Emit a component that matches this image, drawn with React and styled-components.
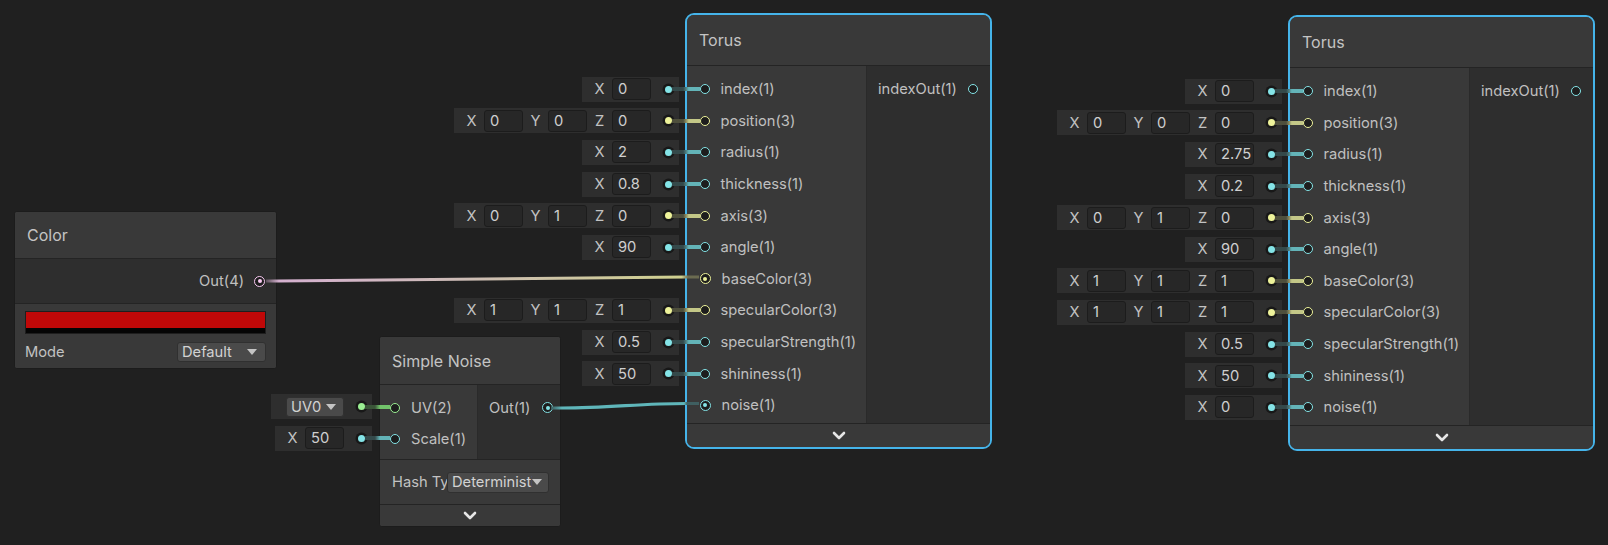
import React from "react";
import styled, { createGlobalStyle, css } from "styled-components";

const GlobalStyle = createGlobalStyle`
  html, body { margin: 0; padding: 0; background: #202020; }
  body { font-family: Inter, "Noto Sans", sans-serif; }
`;

const PORT = { v1: "#84e4e7", v2: "#9aef92", v3: "#eef39a", v4: "#fbcbf4" };
const WIRE = {
  v1: ["#34494a", "#63b4b8"],
  v2: ["#3a5538", "#72c46b"],
  v3: ["#4e4f3c", "#c3c787"],
};

const ROW = 31.6;

const Canvas = styled.div`
  position: relative;
  width: 1608px;
  height: 545px;
  overflow: hidden;
  background: #202020;
  color: #c0c0c0;
  font-size: 14.7px;
`;

// nodes sit on a free canvas, their place is the content
const Slot = styled.div`
  position: absolute;
  left: ${(p) => p.$x}px;
  top: ${(p) => p.$y}px;
  display: flex;
  align-items: flex-start;
`;

const InlineColumn = styled.div`
  width: ${(p) => p.$w}px;
  padding-top: ${(p) => p.$top}px;
  display: flex;
  flex-direction: column;
  align-items: flex-end;
  position: relative;
  z-index: 1;
`;

const InlineRow = styled.div`
  height: ${(p) => p.$h}px;
  display: flex;
  align-items: center;
`;

const FieldBox = styled.div`
  display: flex;
  align-items: center;
  height: 25px;
  background: #2e2e2e;
  padding: 0 7px 0 ${(p) => p.$pad || 5}px;
`;

const Axis = styled.span`
  width: 25px;
  text-align: center;
  color: #c2c2c2;
`;

const NumField = styled.span`
  box-sizing: border-box;
  width: 39px;
  height: 22px;
  background: #272727;
  border: 1px solid #1c1c1c;
  border-radius: 3px;
  padding-left: 5px;
  line-height: 20px;
  color: #cfcfcf;
  white-space: nowrap;
  overflow: hidden;
`;

const InlineDot = styled.span`
  flex: none;
  margin-left: 14px;
  width: 7px;
  height: 7px;
  border-radius: 50%;
  background: ${(p) => p.$c};
  box-shadow: 0 0 0 2.5px #181818;
`;

const Stub = styled.span`
  position: relative;
  z-index: 1;
  flex: none;
  height: 4px;
  width: ${(p) => p.$w}px;
  margin-left: -7px;
  margin-right: ${(p) => -p.$inset}px;
  background: linear-gradient(
    90deg,
    ${(p) => p.$dim} 0%,
    ${(p) => p.$dim} 40%,
    ${(p) => p.$bright} 60%,
    ${(p) => p.$bright} 100%
  );
`;

const Node = styled.div`
  box-sizing: border-box;
  width: ${(p) => p.$w}px;
  display: flex;
  flex-direction: column;
  background: #393939;
  overflow: hidden;
  ${(p) =>
    p.$selected
      ? css`
          border: 2px solid #45b4ea;
          border-radius: 9px;
        `
      : css`
          border: 1px solid #1c1c1c;
          border-radius: 3px;
        `}
`;

const Header = styled.div`
  height: ${(p) => p.$h}px;
  display: flex;
  align-items: center;
  padding-left: 12px;
  font-size: 16px;
  color: #c4c4c4;
  background: #393939;
  border-bottom: 1px solid #242424;
`;

const Body = styled.div`
  display: flex;
  border-bottom: 1px solid #242424;
`;

const InputCol = styled.div`
  width: ${(p) => p.$w}px;
  padding: ${(p) => p.$top}px 0 ${(p) => p.$bottom}px;
  background: #393939;
`;

const OutputCol = styled.div`
  flex: 1;
  padding-top: ${(p) => p.$top}px;
  background: #2e2e2e;
  border-left: 1px solid #2a2a2a;
`;

const PortRow = styled.div`
  height: ${(p) => p.$h}px;
  display: flex;
  align-items: center;
  gap: 11px;
  padding-left: ${(p) => p.$pad}px;
  white-space: nowrap;
`;

const OutRow = styled.div`
  height: ${(p) => p.$h}px;
  display: flex;
  align-items: center;
  justify-content: ${(p) => (p.$end ? "flex-end" : "flex-start")};
  gap: ${(p) => p.$gap || 11}px;
  padding: 0 ${(p) => p.$right || 0}px 0 ${(p) => p.$left || 0}px;
  white-space: nowrap;
`;

const Port = styled.span`
  flex: none;
  box-sizing: border-box;
  width: 10px;
  height: 10px;
  border-radius: 50%;
  border: 1.6px solid ${(p) => p.$c};
  background: #1d1d1d;
  display: flex;
  align-items: center;
  justify-content: center;
  ${(p) =>
    p.$linked &&
    css`
      width: 11px;
      height: 11px;
      &::after {
        content: "";
        width: 4px;
        height: 4px;
        border-radius: 50%;
        background: ${p.$c};
      }
    `}
`;

const Footer = styled.div`
  height: ${(p) => p.$h}px;
  display: flex;
  align-items: center;
  justify-content: center;
  background: #393939;
`;

const Section = styled.div`
  background: ${(p) => (p.$dark ? "#2e2e2e" : "#393939")};
  border-bottom: ${(p) => (p.$line ? "1px solid #242424" : "none")};
  padding: ${(p) => p.$pad || "0"};
`;

const Swatch = styled.div`
  height: 23px;
  box-sizing: border-box;
  border: 1px solid #1e1e1e;
  background: linear-gradient(#c00808 0 75%, #050505 75% 100%);
`;

const FieldRow = styled.div`
  display: flex;
  align-items: center;
  justify-content: space-between;
  height: ${(p) => p.$h}px;
  margin-top: ${(p) => p.$mt || 0}px;
`;

const PropLabel = styled.span`
  width: ${(p) => (p.$w ? `${p.$w}px` : "auto")};
  overflow: hidden;
  white-space: nowrap;
  text-overflow: clip;
  color: #c2c2c2;
`;

const Dropdown = styled.div`
  box-sizing: border-box;
  display: flex;
  align-items: center;
  width: ${(p) => p.$w}px;
  height: ${(p) => p.$h}px;
  background: #4a4a4a;
  border: 1px solid #303030;
  border-radius: 3px;
  padding: 0 ${(p) => p.$pr || 7}px 0 4px;
  color: #d2d2d2;
`;

const DropText = styled.span`
  flex: 1;
  overflow: hidden;
  white-space: nowrap;
  text-overflow: clip;
`;

const Caret = styled.span`
  flex: none;
  width: 0;
  height: 0;
  border-left: 5px solid transparent;
  border-right: 5px solid transparent;
  border-top: 6px solid #c4c4c4;
`;

const Wires = styled.svg`
  position: absolute;
  left: 0;
  top: 0;
  pointer-events: none;
  z-index: 3;
`;

const Chevron = () => (
  <svg width="14" height="9" viewBox="0 0 14 9">
    <polyline points="2,2 7,7 12,2" fill="none" stroke="#e6e6e6" strokeWidth="2.6" strokeLinecap="round" strokeLinejoin="round" />
  </svg>
);

function InlineField({ port, inset, gap, h }) {
  const [dim, bright] = WIRE[port.t];
  return (
    <InlineRow $h={h}>
      {port.field && (
        <>
          <FieldBox $pad={port.drop ? 15 : 5}>
            {port.drop ? (
              <Dropdown $w={58} $h={20} $pr={7}>
                <DropText>{port.drop}</DropText>
                <Caret />
              </Dropdown>
            ) : (
              port.field.map((v, i) => (
                <React.Fragment key={i}>
                  <Axis>{"XYZ"[i]}</Axis>
                  <NumField>{v}</NumField>
                </React.Fragment>
              ))
            )}
            <InlineDot $c={PORT[port.t]} />
          </FieldBox>
          <Stub $w={inset + gap + 7} $inset={inset} $dim={dim} $bright={bright} />
        </>
      )}
    </InlineRow>
  );
}

function TorusNode({ x, y, ports }) {
  return (
    <Slot $x={x - 231} $y={y}>
      <InlineColumn $w={231} $top={60.5}>
        {ports.map((p) => (
          <InlineField key={p.label} port={p} inset={14.5} gap={6} h={ROW} />
        ))}
      </InlineColumn>
      <Node $w={307} $selected>
        <Header $h={50}>Torus</Header>
        <Body>
          <InputCol $w={179} $top={7.5} $bottom={2.2}>
            {ports.map((p) => (
              <PortRow key={p.label} $h={ROW} $pad={12.5}>
                <Port $c={PORT[p.t]} $linked={p.linked} />
                {p.label}
              </PortRow>
            ))}
          </InputCol>
          <OutputCol $top={7.5}>
            <OutRow $h={ROW} $left={11}>
              indexOut(1)
              <Port $c={PORT.v1} />
            </OutRow>
          </OutputCol>
        </Body>
        <Footer $h={23}>
          <Chevron />
        </Footer>
      </Node>
    </Slot>
  );
}

function ColorNode() {
  return (
    <Slot $x={14} $y={211}>
      <Node $w={263}>
        <Header $h={46}>Color</Header>
        <Section $dark $line>
          <OutRow $h={44} $end $right={11} $gap={10}>
            Out(4)
            <Port $c={PORT.v4} $linked />
          </OutRow>
        </Section>
        <Section $pad="7px 10px 7px">
          <Swatch />
          <FieldRow $h={19} $mt={8}>
            <PropLabel>Mode</PropLabel>
            <Dropdown $w={89} $h={20} $pr={8}>
              <DropText>Default</DropText>
              <Caret />
            </Dropdown>
          </FieldRow>
        </Section>
      </Node>
    </Slot>
  );
}

function NoiseNode() {
  const ports = [
    { label: "UV(2)", t: "v2", field: [], drop: "UV0" },
    { label: "Scale(1)", t: "v1", field: ["50"] },
  ];
  return (
    <Slot $x={268} $y={336}>
      <InlineColumn $w={111} $top={55}>
        {ports.map((p) => (
          <InlineField key={p.label} port={p} inset={10.5} gap={7} h={31.5} />
        ))}
      </InlineColumn>
      <Node $w={182}>
        <Header $h={47}>Simple Noise</Header>
        <Body>
          <InputCol $w={97} $top={7} $bottom={4}>
            {ports.map((p) => (
              <PortRow key={p.label} $h={31.5} $pad={10}>
                <Port $c={PORT[p.t]} />
                {p.label}
              </PortRow>
            ))}
          </InputCol>
          <OutputCol $top={7}>
            <OutRow $h={31.5} $left={11} $gap={12}>
              Out(1)
              <Port $c={PORT.v1} $linked />
            </OutRow>
          </OutputCol>
        </Body>
        <Section $line $pad="0 11px 0 12px">
          <FieldRow $h={44}>
            <PropLabel $w={55}>Hash Type</PropLabel>
            <Dropdown $w={102} $h={21} $pr={6}>
              <DropText>Deterministic</DropText>
              <Caret />
            </Dropdown>
          </FieldRow>
        </Section>
        <Footer $h={21}>
          <Chevron />
        </Footer>
      </Node>
    </Slot>
  );
}

const torusA = [
  { label: "index(1)", t: "v1", field: ["0"] },
  { label: "position(3)", t: "v3", field: ["0", "0", "0"] },
  { label: "radius(1)", t: "v1", field: ["2"] },
  { label: "thickness(1)", t: "v1", field: ["0.8"] },
  { label: "axis(3)", t: "v3", field: ["0", "1", "0"] },
  { label: "angle(1)", t: "v1", field: ["90"] },
  { label: "baseColor(3)", t: "v3", linked: true },
  { label: "specularColor(3)", t: "v3", field: ["1", "1", "1"] },
  { label: "specularStrength(1)", t: "v1", field: ["0.5"] },
  { label: "shininess(1)", t: "v1", field: ["50"] },
  { label: "noise(1)", t: "v1", linked: true },
];

const torusB = [
  { label: "index(1)", t: "v1", field: ["0"] },
  { label: "position(3)", t: "v3", field: ["0", "0", "0"] },
  { label: "radius(1)", t: "v1", field: ["2.75"] },
  { label: "thickness(1)", t: "v1", field: ["0.2"] },
  { label: "axis(3)", t: "v3", field: ["0", "1", "0"] },
  { label: "angle(1)", t: "v1", field: ["90"] },
  { label: "baseColor(3)", t: "v3", field: ["1", "1", "1"] },
  { label: "specularColor(3)", t: "v3", field: ["1", "1", "1"] },
  { label: "specularStrength(1)", t: "v1", field: ["0.5"] },
  { label: "shininess(1)", t: "v1", field: ["50"] },
  { label: "noise(1)", t: "v1", field: ["0"] },
];

export default function App() {
  return (
    <>
      <GlobalStyle />
      <Canvas>
        <ColorNode />
        <NoiseNode />
        <TorusNode x={685} y={13} ports={torusA} />
        <TorusNode x={1288} y={15} ports={torusB} />
        <Wires width="1608" height="545">
          <defs>
            <linearGradient id="colorEdge" gradientUnits="userSpaceOnUse" x1="266" y1="0" x2="699" y2="0">
              <stop offset="0" stopColor="#5c505a" />
              <stop offset="0.03" stopColor="#d4b0cf" />
              <stop offset="0.45" stopColor="#cdbcb6" />
              <stop offset="0.96" stopColor="#cfd08e" />
              <stop offset="0.975" stopColor="#6b6b50" />
              <stop offset="1" stopColor="#6b6b50" />
            </linearGradient>
            <linearGradient id="noiseEdge" gradientUnits="userSpaceOnUse" x1="550" y1="0" x2="699" y2="0">
              <stop offset="0" stopColor="#385456" />
              <stop offset="0.08" stopColor="#5fb6ba" />
              <stop offset="0.9" stopColor="#5fb6ba" />
              <stop offset="0.92" stopColor="#3f5f61" />
              <stop offset="1" stopColor="#3f5f61" />
            </linearGradient>
          </defs>
          <path d="M266 281 L278 281 C420 280.5, 560 277, 686 277 L699 277" fill="none" stroke="url(#colorEdge)" strokeWidth="3" />
          <path d="M551 408 L562 408 C610 408, 640 403.5, 686 403.5 L699 403.5" fill="none" stroke="url(#noiseEdge)" strokeWidth="3.2" />
        </Wires>
      </Canvas>
    </>
  );
}
